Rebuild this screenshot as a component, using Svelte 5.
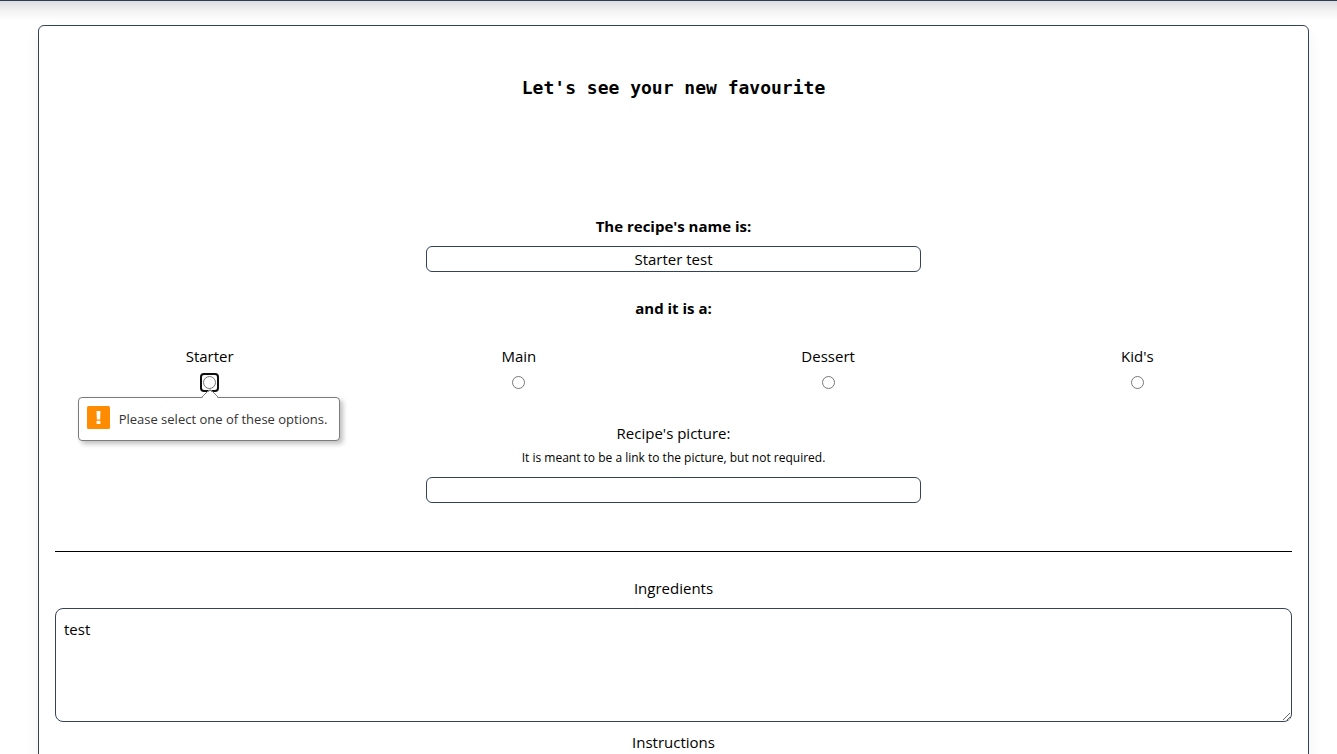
<script>
  const courses = ['Starter', 'Main', 'Dessert', "Kid's"];
  const invalid = 'Starter';
  let name = $state('Starter test');
  let course = $state('');
  let picture = $state('');
  let ingredients = $state('test');
  let instructions = $state('');
</script>

<div class="page">
  <header class="topbar"></header>
  <form class="card">
    <h1>Let's see your new favourite</h1>

    <label class="strong" for="name">The recipe's name is:</label>
    <input class="field" id="name" type="text" bind:value={name} />

    <fieldset>
      <legend class="strong">and it is a:</legend>
      <div class="courses">
        {#each courses as item}
          <div class="course">
            <label for={item}>{item}</label>
            <span class="ring" class:focused={item === invalid}>
              <input id={item} type="radio" name="course" value={item} bind:group={course} />
            </span>
            {#if item === invalid}
              <div class="bubble" role="alert">
                <svg class="arrow" width="18" height="9" viewBox="0 0 18 9" aria-hidden="true">
                  <path d="M1 9 L9 1 L17 9 Z" fill="#fff" />
                  <path d="M0.5 8.5 L8 1 H10 L17.5 8.5" fill="none" stroke="#7b7b7b" />
                </svg>
                <svg width="23" height="23" viewBox="0 0 23 23" aria-hidden="true">
                  <rect width="23" height="23" rx="1.5" fill="#ff8c00" />
                  <path d="M9.5 5 H13.5 L13.1 13.4 H9.9 Z" fill="#fff" />
                  <rect x="9.6" y="14.8" width="3.8" height="3.2" fill="#fff" />
                </svg>
                <span>Please select one of these options.</span>
              </div>
            {/if}
          </div>
        {/each}
      </div>
    </fieldset>

    <label for="picture">Recipe's picture:</label>
    <small id="hint">It is meant to be a link to the picture, but not required.</small>
    <input class="field" id="picture" type="text" aria-describedby="hint" bind:value={picture} />

    <hr />

    <label for="ingredients">Ingredients</label>
    <textarea id="ingredients" bind:value={ingredients}></textarea>
    <label for="instructions">Instructions</label>
    <textarea id="instructions" bind:value={instructions}></textarea>
  </form>
</div>

<style>
  .page {
    height: 100vh;
    overflow: hidden;
    background: #fff;
    color: #000;
    font: 15px/24px 'Segoe UI', 'Open Sans', 'Noto Sans', sans-serif;
  }
  .topbar {
    height: 24px;
    border-top: 1px solid #2c3e50;
    background: linear-gradient(#dddce0, #f3f3f4 10px, #fff 20px);
  }
  .card {
    display: flex;
    flex-direction: column;
    align-items: center;
    margin: 0 28px 24px 38px;
    padding: 50px 16px 24px;
    border: 1px solid #34435a;
    border-radius: 6px;
    background: #fff;
    box-shadow: 0 8px 16px rgba(0, 0, 0, 0.06);
  }
  h1 {
    margin: 0 0 114px;
    font: bold 18px/24px Consolas, 'DejaVu Sans Mono', monospace;
  }
  .strong {
    font-weight: 700;
  }
  .field {
    box-sizing: border-box;
    width: 40%;
    height: 26px;
    margin: 8px 0 0;
    padding: 0 8px;
    border: 1px solid #34435a;
    border-radius: 6px;
    background: #fff;
    color: inherit;
    font: inherit;
    text-align: center;
  }
  fieldset {
    width: 100%;
    margin: 24px 0 29px;
    padding: 0;
    border: 0;
  }
  legend {
    margin: 0 auto;
    padding: 0;
  }
  .courses {
    display: grid;
    grid-template-columns: repeat(4, 1fr);
    padding-top: 24px;
  }
  .course {
    position: relative;
    display: flex;
    flex-direction: column;
    align-items: center;
    gap: 5px;
  }
  .ring {
    display: flex;
    padding: 1px;
    border: 2px solid transparent;
    border-radius: 4px;
  }
  .ring.focused {
    border-color: #101010;
  }
  .ring input {
    width: 13px;
    height: 13px;
    margin: 0;
  }
  .bubble {
    position: absolute;
    top: 53px;
    left: calc(50% - 132px);
    z-index: 1;
    display: flex;
    gap: 9px;
    box-sizing: border-box;
    height: 44px;
    padding: 8px 12px 8px 8px;
    border: 1px solid #7b7b7b;
    border-radius: 4px;
    background: #fff;
    box-shadow: 3px 3px 5px rgba(0, 0, 0, 0.25);
    color: #333;
    font-size: 13px;
    line-height: 26px;
    white-space: nowrap;
  }
  .arrow {
    position: absolute;
    top: -9px;
    left: 122px;
  }
  small {
    margin-top: 2px;
    font-size: 12px;
    line-height: 22px;
  }
  hr {
    width: 100%;
    margin: 48px 0 24px;
    border: 0;
    border-top: 1px solid #000;
  }
  textarea {
    box-sizing: border-box;
    width: 100%;
    height: 114px;
    margin: 8px 0;
    padding: 8px;
    border: 1px solid #34435a;
    border-radius: 8px;
    background: #fff;
    color: inherit;
    font: inherit;
    resize: both;
  }
</style>
